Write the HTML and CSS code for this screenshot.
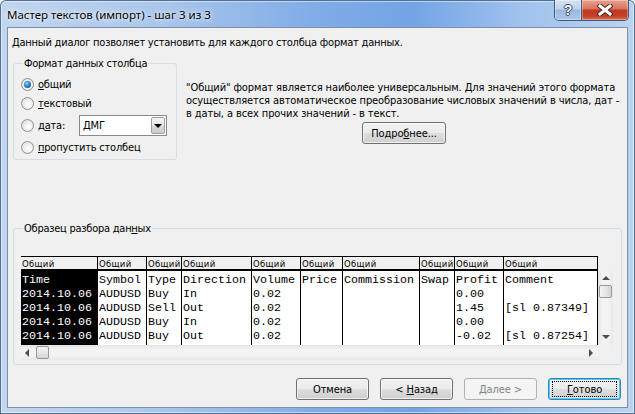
FILE: index.html
```html
<!DOCTYPE html>
<html lang="ru">
<head>
<meta charset="utf-8">
<title>Мастер текстов (импорт) - шаг 3 из 3</title>
<link rel="stylesheet" href="styles.css">
</head>
<body>
<div class="window">
  <div class="titlebar">
    <span class="title">Мастер текстов (импорт) - шаг 3 из 3</span>
    <div class="caption-btns">
      <div class="cbtn help"><span>?</span></div>
      <div class="cbtn close">
        <svg width="16" height="12" viewBox="0 0 16 12"><path d="M3 2 L13 10 M13 2 L3 10" stroke="#4a2a22" stroke-width="5" stroke-linecap="square" fill="none"/><path d="M3 2 L13 10 M13 2 L3 10" stroke="#ffffff" stroke-width="3" stroke-linecap="square" fill="none"/></svg>
      </div>
    </div>
  </div>
  <div class="client">
    <p class="intro">Данный диалог позволяет установить для каждого столбца формат данных.</p>
    <div class="top-row">
      <div class="group fmt">
        <span class="group-label">Формат данных столбца</span>
        <div class="radios">
          <div class="radio-row"><span class="rb checked"></span><span class="rl"><u>о</u>бщий</span></div>
          <div class="radio-row"><span class="rb"></span><span class="rl"><u>т</u>екстовый</span></div>
          <div class="radio-row date"><span class="rb"></span><span class="rl date-label">д<u>а</u>та:</span>
            <div class="combo"><span class="combo-val">ДМГ</span><span class="combo-btn"><span class="tri-down"></span></span></div>
          </div>
          <div class="radio-row"><span class="rb"></span><span class="rl"><u>п</u>ропустить столбец</span></div>
        </div>
      </div>
      <div class="desc">
        <p class="desc-text">"Общий" формат является наиболее универсальным. Для значений этого формата<br>осуществляется автоматическое преобразование числовых значений в числа, дат -<br>в даты, а всех прочих значений - в текст.</p>
        <button class="btn more">Подро<u>б</u>нее...</button>
      </div>
    </div>
    <div class="group preview">
      <span class="group-label">Образец разбора дан<u>н</u>ых</span>
      <div class="pgrid">
        <div class="hdr">
          <div class="hc w-time">Общий</div>
          <div class="hc w-sym">Общий</div>
          <div class="hc w-type">Общий</div>
          <div class="hc w-dir">Общий</div>
          <div class="hc w-vol">Общий</div>
          <div class="hc w-price">Общий</div>
          <div class="hc w-comm">Общий</div>
          <div class="hc w-swap">Общий</div>
          <div class="hc w-prof">Общий</div>
          <div class="hc w-cmt">Общий</div>
        </div>
        <div class="body">
          <div class="col w-time sel"><div>Time</div><div>2014.10.06</div><div>2014.10.06</div><div>2014.10.06</div><div>2014.10.06</div></div>
          <div class="col w-sym"><div>Symbol</div><div>AUDUSD</div><div>AUDUSD</div><div>AUDUSD</div><div>AUDUSD</div></div>
          <div class="col w-type"><div>Type</div><div>Buy</div><div>Sell</div><div>Buy</div><div>Buy</div></div>
          <div class="col w-dir"><div>Direction</div><div>In</div><div>Out</div><div>In</div><div>Out</div></div>
          <div class="col w-vol"><div>Volume</div><div>0.02</div><div>0.02</div><div>0.02</div><div>0.02</div></div>
          <div class="col w-price"><div>Price</div></div>
          <div class="col w-comm"><div>Commission</div></div>
          <div class="col w-swap"><div>Swap</div></div>
          <div class="col w-prof"><div>Profit</div><div>0.00</div><div>1.45</div><div>0.00</div><div>-0.02</div></div>
          <div class="col w-cmt"><div>Comment</div><div></div><div>[sl 0.87349]</div><div></div><div>[sl 0.87254]</div></div>
        </div>
        <div class="vscroll">
          <span class="arr up"></span>
          <span class="vthumb"></span>
          <span class="vfill"></span>
          <span class="arr down"></span>
        </div>
        <div class="hscroll">
          <span class="arr left"></span>
          <span class="hthumb"></span>
          <span class="hfill"></span>
          <span class="arr right"></span>
        </div>
        <div class="corner"></div>
      </div>
    </div>
    <div class="buttons">
      <button class="btn">Отмена</button>
      <button class="btn">&lt; <u>Н</u>азад</button>
      <button class="btn disabled">Далее &gt;</button>
      <button class="btn default"><span class="focus"><u>Г</u>отово</span></button>
    </div>
  </div>
</div>
</body>
</html>
```

FILE: styles.css
```css
html, body {
  margin: 0;
  padding: 0;
}
body {
  width: 635px;
  height: 414px;
  overflow: hidden;
  font-family: "DejaVu Sans Condensed", "Liberation Sans", sans-serif;
  font-stretch: condensed;
  font-size: 11px;
  letter-spacing: -0.12px;
  color: #000;
}
.window {
  width: 635px;
  height: 414px;
  box-sizing: border-box;
  padding: 0 7px 6px 7px;
  display: flex;
  flex-direction: column;
  border-radius: 6px 6px 0 0;
  background:
    linear-gradient(90deg, #c2d6ef 0%, #aac6eb 25%, #80ace7 50%, #74a4e5 65%, #a0c2ee 82%, #bcd3ef 100%);
  box-shadow: inset 0 0 0 1px #4f6f99, inset 0 0 0 2px rgba(255,255,255,0.5);
}
.titlebar {
  height: 27px;
  display: flex;
  align-items: flex-start;
}
.title {
  font-family: "Noto Sans", "Liberation Sans", sans-serif;
  font-stretch: normal;
  letter-spacing: 0;
  font-size: 11.5px;
  line-height: 27px;
  padding-top: 1px;
  color: #000;
  text-shadow: 0 0 6px #ffffff, 0 0 3px rgba(255,255,255,0.8);
}
.caption-btns {
  margin-left: auto;
  margin-right: -1px;
  display: flex;
  height: 20px;
  border: 1px solid #3e5878;
  border-top: none;
  border-radius: 0 0 5px 5px;
  overflow: hidden;
}
.cbtn {
  height: 20px;
  display: flex;
  align-items: center;
  justify-content: center;
  box-shadow: inset 0 0 0 1px rgba(255,255,255,0.35);
}
.cbtn.help {
  width: 26px;
  border-right: 1px solid #3e5878;
  background: linear-gradient(#d6e3f3 0%, #bfd2ea 45%, #9ab8dd 50%, #adc7e7 100%);
}
.cbtn.help span {
  font-family: "Liberation Sans", sans-serif;
  font-weight: bold;
  font-size: 14px;
  letter-spacing: 0;
  color: #fff;
  text-shadow: 1px 0 0 #2f4564, -1px 0 0 #2f4564, 0 1px 0 #2f4564, 0 -1px 0 #2f4564;
}
.cbtn.close {
  width: 46px;
  background: linear-gradient(#e9a28f 0%, #d97560 42%, #c0391f 52%, #c4402a 80%, #db6e50 100%);
}
.client {
  flex: 1;
  border: 1px solid #7a8fa9;
  background: #f0f0f0;
  display: flex;
  flex-direction: column;
}
p { margin: 0; }
.intro {
  margin: 8px 0 0 4px;
  line-height: 13px;
  letter-spacing: -0.22px;
}
.top-row {
  display: flex;
  margin: 14px 0 0 5px;
}
.group {
  border: 1px solid #d5dfe5;
  border-radius: 3px;
  box-sizing: border-box;
}
.group-label {
  display: block;
  width: fit-content;
  margin: -7px 0 0 2px;
  padding: 0 1px;
  background: #f0f0f0;
  line-height: 13px;
  letter-spacing: -0.25px;
}
.fmt {
  width: 164px;
  height: 97px;
  padding-left: 7px;
}
.radios {
  display: flex;
  flex-direction: column;
  gap: 3px;
  margin-top: 6px;
}
.radio-row {
  height: 16px;
  display: flex;
  align-items: center;
}
.radio-row.date {
  height: 21px;
  margin-top: 1px;
}
.rb {
  width: 13px;
  height: 13px;
  box-sizing: border-box;
  border-radius: 50%;
  border: 1px solid #8f9090;
  background: radial-gradient(circle at 60% 60%, #ffffff 0%, #f2f2f2 35%, #d6d6d6 100%);
  display: flex;
  align-items: center;
  justify-content: center;
  flex: none;
}
.rb.checked::after {
  content: "";
  width: 7px;
  height: 7px;
  border-radius: 50%;
  background: radial-gradient(circle at 40% 35%, #9fd7fb 0%, #2b8ad0 40%, #0f4a86 100%);
}
.rl {
  margin-left: 4px;
  line-height: 13px;
  letter-spacing: -0.2px;
}
.date-label {
  width: 41px;
}
.combo {
  width: 88px;
  height: 21px;
  box-sizing: border-box;
  border: 1px solid #8a8a8a;
  background: #fff;
  display: flex;
  align-items: center;
  justify-content: space-between;
}
.combo-val {
  padding-left: 3px;
}
.combo-btn {
  width: 14px;
  height: 17px;
  margin-right: 1px;
  box-sizing: border-box;
  border: 1px solid #a0a0a0;
  border-radius: 2px;
  background: linear-gradient(#f4f4f4 0%, #e6e6e6 50%, #d8d8d8 51%, #cccccc 100%);
  display: flex;
  align-items: center;
  justify-content: center;
}
.tri-down {
  width: 0;
  height: 0;
  border-left: 4px solid transparent;
  border-right: 4px solid transparent;
  border-top: 4px solid #000;
}
.desc {
  margin-left: 9px;
  padding-top: 18px;
  display: flex;
  flex-direction: column;
  align-items: flex-start;
}
.desc-text {
  line-height: 13px;
  white-space: nowrap;
  letter-spacing: -0.1px;
}
.btn {
  font-family: inherit;
  font-stretch: condensed;
  font-size: 11px;
  letter-spacing: -0.1px;
  color: #000;
  width: 73px;
  height: 22px;
  padding: 0;
  box-sizing: border-box;
  border: 1px solid #707070;
  border-radius: 3px;
  background: linear-gradient(#f2f2f2 0%, #ebebeb 48%, #dddddd 52%, #cfcfcf 100%);
  box-shadow: inset 0 0 0 1px rgba(255,255,255,0.7);
}
.btn.more {
  width: 84px;
  margin-top: 2px;
  margin-left: 176px;
}
.btn.disabled {
  border-color: #adb2b5;
  background: #f4f4f4;
  color: #838383;
  box-shadow: none;
}
.btn.default {
  border-color: #3c7fb1;
  box-shadow: inset 0 0 0 1px #48d0fe, inset 0 0 0 2px rgba(255,255,255,0.4);
  padding: 2px 3px;
  display: flex;
}
.focus {
  flex: 1;
  border: 1px dotted #000;
  display: flex;
  align-items: center;
  justify-content: center;
}
.preview {
  margin: 68px 5px 0 5px;
  padding: 0 0 4px 7px;
}
.pgrid {
  margin-top: 21px;
  display: grid;
  grid-template-columns: 577px 15px;
  grid-template-rows: 15px 74px 15px;
  width: 592px;
}
.hdr {
  grid-column: 1;
  grid-row: 1;
  display: flex;
  box-sizing: border-box;
  border-top: 1px solid #000;
  border-bottom: 2px solid #000;
  background: #f0f0f0;
}
.hc {
  box-sizing: border-box;
  border-right: 1px solid #000;
  font-family: "DejaVu Sans", sans-serif;
  font-stretch: normal;
  font-size: 8.5px;
  line-height: 15px;
  padding-left: 1px;
  white-space: nowrap;
  overflow: hidden;
  letter-spacing: 0.3px;
}
.w-time { width: 77px; }
.w-sym { width: 49px; }
.w-type { width: 35px; }
.w-dir { width: 70px; }
.w-vol { width: 49px; }
.w-price { width: 42px; }
.w-comm { width: 77px; }
.w-swap { width: 35px; }
.w-prof { width: 49px; }
.w-cmt { width: 94px; }
.body {
  grid-column: 1;
  grid-row: 2;
  display: flex;
  background: #fff;
  overflow: hidden;
}
.col {
  box-sizing: border-box;
  border-right: 1px solid #000;
  padding-top: 2px;
  overflow: hidden;
  font-family: "Liberation Mono", monospace;
  font-size: 11.67px;
  letter-spacing: 0;
  flex: none;
}
.col div {
  height: 14px;
  line-height: 14px;
  padding-left: 1px;
  white-space: pre;
}
.col.sel {
  background: #000;
  color: #fff;
}
.vscroll {
  grid-column: 2;
  grid-row: 2;
  background: linear-gradient(90deg, #e3e3e3, #f3f3f3 30%, #f3f3f3 70%, #e8e8e8);
  display: flex;
  flex-direction: column;
  align-items: center;
}
.hscroll {
  grid-column: 1;
  grid-row: 3;
  background: linear-gradient(#e3e3e3, #f3f3f3 30%, #f3f3f3 70%, #e8e8e8);
  display: flex;
  align-items: center;
}
.corner {
  grid-column: 2;
  grid-row: 3;
  background: #f0f0f0;
}
.arr {
  width: 0;
  height: 0;
  flex: none;
}
.arr.up {
  margin-top: 5px;
  border-left: 4px solid transparent;
  border-right: 4px solid transparent;
  border-bottom: 4px solid #4d4d4d;
}
.arr.down {
  margin-bottom: 6px;
  border-left: 4px solid transparent;
  border-right: 4px solid transparent;
  border-top: 4px solid #4d4d4d;
}
.arr.left {
  margin-left: 4px;
  border-top: 4px solid transparent;
  border-bottom: 4px solid transparent;
  border-right: 4px solid #4d4d4d;
}
.arr.right {
  margin-right: 5px;
  border-top: 4px solid transparent;
  border-bottom: 4px solid transparent;
  border-left: 4px solid #4d4d4d;
}
.vthumb {
  margin-top: 5px;
  width: 13px;
  height: 13px;
  box-sizing: border-box;
  border: 1px solid #979797;
  border-radius: 2px;
  background: linear-gradient(90deg, #f3f3f3, #e6e6e6 50%, #d5d5d5);
  flex: none;
}
.hthumb {
  margin-left: 7px;
  width: 13px;
  height: 13px;
  box-sizing: border-box;
  border: 1px solid #979797;
  border-radius: 2px;
  background: linear-gradient(#f3f3f3, #e6e6e6 50%, #d5d5d5);
  flex: none;
}
.vfill, .hfill { flex: 1; }
.buttons {
  display: flex;
  justify-content: flex-end;
  gap: 11px;
  margin-top: 13px;
  padding-right: 6px;
}
u { text-decoration: underline; text-underline-offset: 1px; }
```
